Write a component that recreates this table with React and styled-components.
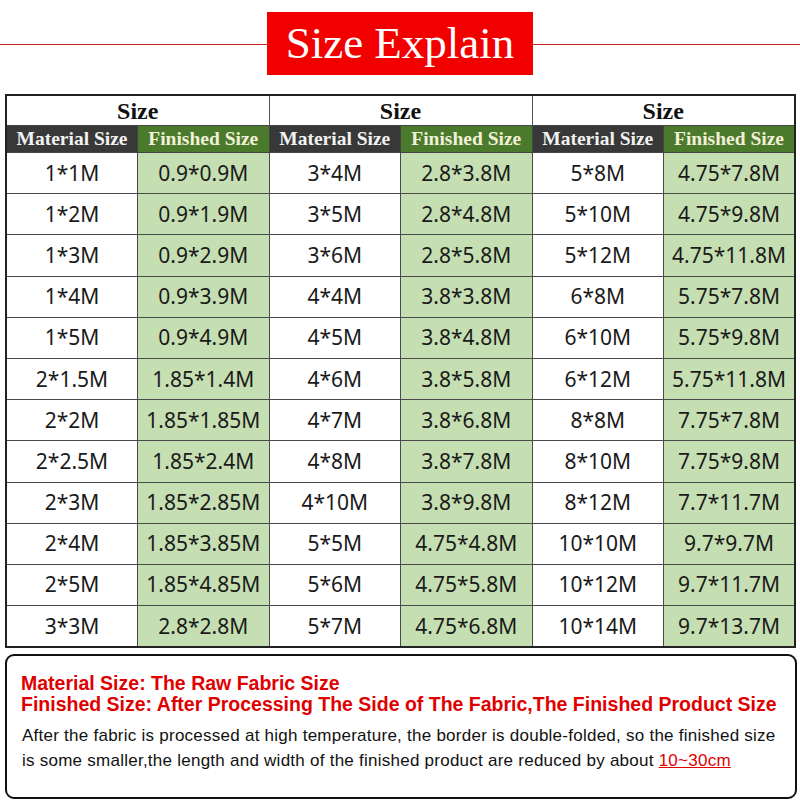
import React from "react";
import styled, { createGlobalStyle } from "styled-components";

const GlobalStyle = createGlobalStyle`
  body {
    margin: 0;
    background: #fff;
    font-family: "Liberation Sans", Arial, sans-serif;
  }
`;

const Page = styled.div`
  width: 800px;
  height: 800px;
  overflow: hidden;
  background: #fff;
`;

const TitleBar = styled.div`
  display: flex;
  align-items: flex-start;
  padding-top: 12px;
  height: 94px;
  box-sizing: border-box;
`;

const Rule = styled.div`
  flex: 1;
  height: 1px;
  background: #c42020;
  margin-top: 32px;
`;

const TitleBox = styled.div`
  width: 266px;
  height: 63px;
  background: #f20000;
  color: #fff;
  display: flex;
  align-items: center;
  justify-content: center;
  font-family: "Liberation Serif", "DejaVu Serif", serif;
  font-size: 45px;
  line-height: 1;
`;

const Table = styled.table`
  margin: 0 0 0 5px;
  width: 791px;
  border-collapse: collapse;
  table-layout: fixed;
  border: 2px solid #222;
`;

const GroupHead = styled.th`
  height: 29px;
  padding: 0;
  font-family: "Liberation Serif", "DejaVu Serif", serif;
  font-weight: bold;
  font-size: 24px;
  line-height: 1;
  color: #111;
  background: #fff;
  border: 1px solid #555;
  border-bottom: none;
`;

const SubHead = styled.th`
  height: 26px;
  padding: 0;
  font-family: "Liberation Serif", "DejaVu Serif", serif;
  font-weight: bold;
  font-size: 19.5px;
  line-height: 1;
  white-space: nowrap;
  color: ${(p) => (p.$finished ? "#f1f0d8" : "#f2f2f2")};
  background: ${(p) => (p.$finished ? "#4c7a2c" : "#383838")};
  border: 1px solid #444;
`;

const Cell = styled.td`
  height: 40.2px;
  padding: 0;
  text-align: center;
  font-family: "Noto Sans", "Liberation Sans", sans-serif;
  font-size: 21px;
  line-height: 1;
  color: #1a1a1a;
  background: ${(p) => (p.$finished ? "#c5dfb2" : "#fff")};
  border: 1px solid #4a4a4a;
  white-space: nowrap;
`;

const NoteBox = styled.div`
  margin: 6px 3px 0 5px;
  height: 145px;
  box-sizing: border-box;
  border: 2px solid #111;
  border-radius: 9px;
  padding: 17px 0 0 14px;
`;

const RedLine = styled.div`
  font-family: "Liberation Sans Narrow", "Liberation Sans", sans-serif;
  font-weight: bold;
  font-size: 19.5px;
  line-height: 21px;
  color: #e00000;
  white-space: nowrap;
`;

const Body = styled.p`
  margin: 8px 0 0 1px;
  font-family: "Liberation Sans Narrow", "Liberation Sans", sans-serif;
  font-size: 17px;
  letter-spacing: 0.25px;
  line-height: 25px;
  color: #111;
  white-space: nowrap;
`;

const Mark = styled.span`
  color: #e00000;
  text-decoration: underline;
`;

const groups = [
  [
    ["1*1M", "0.9*0.9M"],
    ["1*2M", "0.9*1.9M"],
    ["1*3M", "0.9*2.9M"],
    ["1*4M", "0.9*3.9M"],
    ["1*5M", "0.9*4.9M"],
    ["2*1.5M", "1.85*1.4M"],
    ["2*2M", "1.85*1.85M"],
    ["2*2.5M", "1.85*2.4M"],
    ["2*3M", "1.85*2.85M"],
    ["2*4M", "1.85*3.85M"],
    ["2*5M", "1.85*4.85M"],
    ["3*3M", "2.8*2.8M"],
  ],
  [
    ["3*4M", "2.8*3.8M"],
    ["3*5M", "2.8*4.8M"],
    ["3*6M", "2.8*5.8M"],
    ["4*4M", "3.8*3.8M"],
    ["4*5M", "3.8*4.8M"],
    ["4*6M", "3.8*5.8M"],
    ["4*7M", "3.8*6.8M"],
    ["4*8M", "3.8*7.8M"],
    ["4*10M", "3.8*9.8M"],
    ["5*5M", "4.75*4.8M"],
    ["5*6M", "4.75*5.8M"],
    ["5*7M", "4.75*6.8M"],
  ],
  [
    ["5*8M", "4.75*7.8M"],
    ["5*10M", "4.75*9.8M"],
    ["5*12M", "4.75*11.8M"],
    ["6*8M", "5.75*7.8M"],
    ["6*10M", "5.75*9.8M"],
    ["6*12M", "5.75*11.8M"],
    ["8*8M", "7.75*7.8M"],
    ["8*10M", "7.75*9.8M"],
    ["8*12M", "7.7*11.7M"],
    ["10*10M", "9.7*9.7M"],
    ["10*12M", "9.7*11.7M"],
    ["10*14M", "9.7*13.7M"],
  ],
];

export default function App() {
  const rows = groups[0].map((_, i) => groups.map((g) => g[i]));
  return (
    <Page>
      <GlobalStyle />
      <TitleBar>
        <Rule />
        <TitleBox>Size Explain</TitleBox>
        <Rule />
      </TitleBar>
      <Table>
        <thead>
          <tr>
            {groups.map((_, i) => (
              <GroupHead key={i} colSpan={2}>
                Size
              </GroupHead>
            ))}
          </tr>
          <tr>
            {groups.map((_, i) => (
              <React.Fragment key={i}>
                <SubHead>Material Size</SubHead>
                <SubHead $finished>Finished Size</SubHead>
              </React.Fragment>
            ))}
          </tr>
        </thead>
        <tbody>
          {rows.map((row, i) => (
            <tr key={i}>
              {row.map(([mat, fin], j) => (
                <React.Fragment key={j}>
                  <Cell>{mat}</Cell>
                  <Cell $finished>{fin}</Cell>
                </React.Fragment>
              ))}
            </tr>
          ))}
        </tbody>
      </Table>
      <NoteBox>
        <RedLine>Material Size: The Raw Fabric Size</RedLine>
        <RedLine>
          Finished Size: After Processing The Side of The Fabric,The Finished
          Product Size
        </RedLine>
        <Body>
          After the fabric is processed at high temperature, the border is
          double-folded, so the finished size
          <br />
          is some smaller,the length and width of the finished product are
          reduced by about <Mark>10~30cm</Mark>
        </Body>
      </NoteBox>
    </Page>
  );
}
